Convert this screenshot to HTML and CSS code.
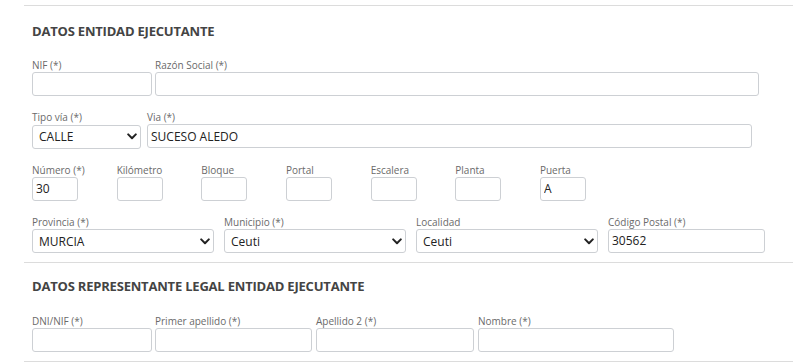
FILE: index.html
```html
<!DOCTYPE html>
<html lang="es">
<head>
<meta charset="utf-8">
<title>Datos entidad ejecutante</title>
<link rel="stylesheet" href="styles.css">
</head>
<body>
<div class="panel">
  <section class="section first">
    <h2 class="heading">DATOS ENTIDAD EJECUTANTE</h2>
    <div class="row gap3">
      <div class="field w120"><label>NIF (*)</label><input type="text" value=""></div>
      <div class="field w604"><label>Razón Social (*)</label><input type="text" value=""></div>
    </div>
    <div class="row gap6">
      <div class="field w109"><label>Tipo vía (*)</label>
        <div class="select-wrap"><select><option>CALLE</option></select>
          <svg class="chev" viewBox="0 0 10 7"><path d="M1.2 1.4 L5 5.2 L8.8 1.4" fill="none" stroke="#222" stroke-width="2" stroke-linecap="round" stroke-linejoin="round"/></svg></div>
      </div>
      <div class="field w605"><label>Via (*)</label><input type="text" value="SUCESO ALEDO"></div>
    </div>
    <div class="row small-row">
      <div class="field w46"><label>Número (*)</label><input type="text" value="30"></div>
      <div class="field w46"><label>Kilómetro</label><input type="text" value=""></div>
      <div class="field w46"><label>Bloque</label><input type="text" value=""></div>
      <div class="field w46"><label>Portal</label><input type="text" value=""></div>
      <div class="field w46"><label>Escalera</label><input type="text" value=""></div>
      <div class="field w46"><label>Planta</label><input type="text" value=""></div>
      <div class="field w46"><label>Puerta</label><input type="text" value="A"></div>
    </div>
    <div class="row gap10">
      <div class="field w182"><label>Provincia (*)</label>
        <div class="select-wrap"><select><option>MURCIA</option></select>
          <svg class="chev" viewBox="0 0 10 7"><path d="M1.2 1.4 L5 5.2 L8.8 1.4" fill="none" stroke="#222" stroke-width="2" stroke-linecap="round" stroke-linejoin="round"/></svg></div>
      </div>
      <div class="field w182"><label>Municipio (*)</label>
        <div class="select-wrap"><select><option>Ceuti</option></select>
          <svg class="chev" viewBox="0 0 10 7"><path d="M1.2 1.4 L5 5.2 L8.8 1.4" fill="none" stroke="#222" stroke-width="2" stroke-linecap="round" stroke-linejoin="round"/></svg></div>
      </div>
      <div class="field w182"><label>Localidad</label>
        <div class="select-wrap"><select><option>Ceuti</option></select>
          <svg class="chev" viewBox="0 0 10 7"><path d="M1.2 1.4 L5 5.2 L8.8 1.4" fill="none" stroke="#222" stroke-width="2" stroke-linecap="round" stroke-linejoin="round"/></svg></div>
      </div>
      <div class="field w157"><label>Código Postal (*)</label><input type="text" value="30562"></div>
    </div>
  </section>
  <section class="section second">
    <h2 class="heading">DATOS REPRESENTANTE LEGAL ENTIDAD EJECUTANTE</h2>
    <div class="row rep-row">
      <div class="field w120"><label>DNI/NIF (*)</label><input type="text" value=""></div>
      <div class="field w157 ml3"><label>Primer apellido (*)</label><input type="text" value=""></div>
      <div class="field w158 ml4"><label>Apellido 2 (*)</label><input type="text" value=""></div>
      <div class="field w196 ml4"><label>Nombre (*)</label><input type="text" value=""></div>
    </div>
  </section>
  <div class="bottom-line"></div>
</div>
</body>
</html>
```
FILE: styles.css
```css
* { box-sizing: border-box; }
html, body { margin: 0; padding: 0; background: #fff; }
body {
  font-family: "Open Sans", "Noto Sans", sans-serif;
  color: #333;
  width: 807px;
  height: 362px;
  overflow: hidden;
}
.panel {
  margin: 5px 14px 0 24px;
}
.section {
  border-top: 1px solid #dcdcdc;
  padding: 0 8px 9px 8px;
}
.heading {
  margin: 16px 0 21px 0;
  font-size: 13px;
  line-height: 18px;
  font-weight: 700;
  color: #444;
  letter-spacing: -0.2px;
}
.second .heading { margin-top: 14px; margin-bottom: 22px; }
.row {
  display: flex;
  margin-top: 17px;
}
.heading + .row { margin-top: 0; }
.gap3 { gap: 3px; }
.gap6 { gap: 6px; }
.gap10 { gap: 10px; }
.small-row { gap: 38.67px; }
.ml3 { margin-left: 3px; }
.ml4 { margin-left: 4px; }
.field { display: flex; flex-direction: column; }
.field label {
  font-size: 10px;
  line-height: 11px;
  height: 11px;
  color: #6a6a6a;
  white-space: nowrap;
  position: relative;
  top: -1px;
}
.w46 { width: 46px; }
.w109 { width: 109px; }
.w120 { width: 120px; }
.w157 { width: 157px; }
.w158 { width: 158px; }
.w182 { width: 182px; }
.w196 { width: 196px; }
.w604 { width: 604px; }
.w605 { width: 605px; }
input, select {
  width: 100%;
  height: 24px;
  margin: 0;
  border: 1px solid #cdd0d4;
  border-radius: 3px;
  background: #fff;
  font-family: "Open Sans", "Noto Sans", sans-serif;
  font-size: 12px;
  color: #222;
  outline: none;
}
input { padding: 0 3px; }
select {
  -webkit-appearance: none;
  appearance: none;
  padding: 0 18px 0 6px;
}
.select-wrap { position: relative; }
.chev {
  position: absolute;
  right: 4px;
  top: 9px;
  width: 10px;
  height: 7px;
}
.bottom-line {
  border-top: 1px solid #dcdcdc;
}
```
